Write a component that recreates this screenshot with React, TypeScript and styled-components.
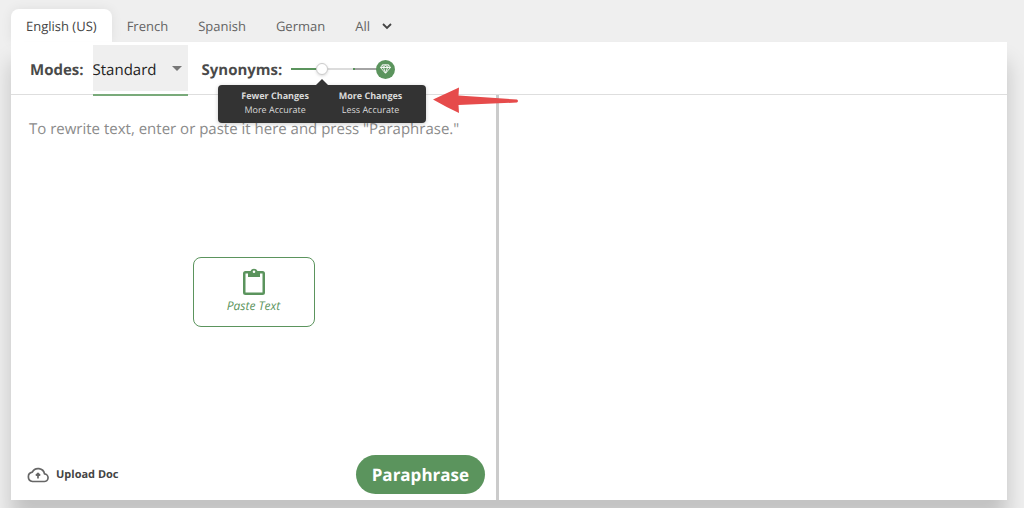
import React, { useState } from "react";
import styled, { createGlobalStyle } from "styled-components";

const green = "#5b945d";

const GlobalStyle = createGlobalStyle`
  *, *::before, *::after { box-sizing: border-box; }
  html, body { margin: 0; }
  body {
    background: #efefef;
    color: #4a4a4a;
    font-family: "Open Sans", "Noto Sans", sans-serif;
    text-rendering: geometricPrecision;
    overflow: hidden;
  }
  button, input, select, textarea {
    font-family: inherit;
    margin: 0;
    text-rendering: inherit;
  }
`;

const Page = styled.main`
  display: flex;
  flex-direction: column;
  min-height: 100vh;
  padding: 9px 17px 8px 11px;
`;

const Tabs = styled.div`
  display: flex;
  align-items: stretch;
  height: 33px;
`;

const Tab = styled.button<{ $active?: boolean }>`
  display: flex;
  align-items: center;
  gap: 11px;
  padding: 0 15px;
  border: 0;
  border-radius: 8px 8px 0 0;
  background: ${(p) => (p.$active ? "#fff" : "transparent")};
  box-shadow: ${(p) => (p.$active ? "0 0 12px rgba(0, 0, 0, 0.07)" : "none")};
  color: ${(p) => (p.$active ? "#444" : "#636363")};
  font-size: 13px;
  font-weight: ${(p) => (p.$active ? 500 : 400)};
`;

const Panel = styled.section`
  position: relative;
  flex: 1;
  display: flex;
  flex-direction: column;
  background: #fff;
  box-shadow: 0 20px 20px rgba(0, 0, 0, 0.19);
`;

const Toolbar = styled.div`
  display: flex;
  align-items: flex-start;
  height: 53px;
  padding: 3px 19px 0;
  border-bottom: 1px solid #dedede;
`;

const ToolLabel = styled.label`
  line-height: 50px;
  font-size: 15px;
  font-weight: 700;
`;

const ModePicker = styled.div`
  position: relative;
  width: 95px;
  height: 51px;
  margin: 0 14px 0 9px;
  border-bottom: 2px solid #79aa7a;
`;

const ModeSelect = styled.select`
  appearance: none;
  width: 100%;
  height: 46px;
  padding: 4px 0 0;
  border: 0;
  background: #efefef;
  color: #222;
  font-size: 15px;
  font-weight: 500;
`;

const Caret = styled.svg`
  position: absolute;
  right: 6px;
  top: 21px;
  pointer-events: none;
`;

const SliderGroup = styled.div`
  position: relative;
  display: flex;
  align-items: center;
  height: 48px;
  width: 104px;
  margin-left: 9px;
`;

const Slider = styled.input<{ $value: number }>`
  appearance: none;
  width: 94px;
  height: 12px;
  background: linear-gradient(
      to right,
      ${green} 0 ${(p) => p.$value}%,
      #dcdcdc ${(p) => p.$value}% 66%,
      ${green} 66% 68%,
      #a4a4a4 68%
    )
    center / 100% 2px no-repeat;
  &::-webkit-slider-thumb {
    appearance: none;
    width: 12px;
    height: 12px;
    border: 1px solid #ccc;
    border-radius: 50%;
    background: #fff;
    box-shadow: 0 1px 3px rgba(0, 0, 0, 0.15);
  }
`;

const PremiumBadge = styled.span`
  position: absolute;
  right: 0;
  display: grid;
  place-items: center;
  width: 19px;
  height: 19px;
  border-radius: 50%;
  background: ${green};
`;

const Tooltip = styled.div`
  position: absolute;
  z-index: 2;
  top: 40px;
  left: -73px;
  display: flex;
  justify-content: space-between;
  width: 208px;
  height: 38px;
  padding: 4px 24px 0 23px;
  border-radius: 4px;
  background: #333;
  color: #dadada;
  box-shadow: 0 1px 4px rgba(0, 0, 0, 0.2);
  font-size: 9px;
  line-height: 14px;
  text-align: center;
  white-space: nowrap;
  &::before {
    content: "";
    position: absolute;
    left: 98px;
    top: -6px;
    border: 6px solid transparent;
    border-top: 0;
    border-bottom-color: #333;
  }
`;

const TooltipColumn = styled.div`
  display: flex;
  flex-direction: column;
`;

const Arrow = styled.svg`
  position: absolute;
  z-index: 2;
  left: 421px;
  top: 45px;
`;

const Panes = styled.div`
  flex: 1;
  display: flex;
`;

const InputPane = styled.div`
  flex: 0 0 49%;
  display: flex;
  flex-direction: column;
  border-right: 3px solid #cbcbcb;
`;

const OutputPane = styled.div`
  flex: 1;
`;

const Editor = styled.div`
  flex: 1;
  display: grid;
  > * { grid-area: 1 / 1; }
`;

const TextInput = styled.textarea`
  width: 100%;
  height: 100%;
  padding: 23px 18px;
  border: 0;
  outline: 0;
  resize: none;
  background: transparent;
  font-size: 15px;
  line-height: 22px;
  &::placeholder { color: #8b8b8b; }
`;

const PasteButton = styled.button`
  place-self: center;
  display: flex;
  flex-direction: column;
  align-items: center;
  width: 122px;
  height: 70px;
  margin-top: 34px;
  padding: 9px 0 0;
  border: 1px solid ${green};
  border-radius: 8px;
  background: #fff;
  color: ${green};
  font-size: 12px;
  font-style: italic;
  line-height: 18px;
`;

const Footer = styled.div`
  display: flex;
  align-items: center;
  justify-content: space-between;
  padding: 0 11px 6px 16px;
`;

const UploadButton = styled.button`
  display: flex;
  align-items: center;
  gap: 7px;
  padding: 0;
  border: 0;
  background: none;
  color: #444;
  font-size: 11px;
  font-weight: 700;
`;

const ParaphraseButton = styled.button`
  height: 39px;
  padding: 0 16px;
  border: 0;
  border-radius: 20px;
  background: ${green};
  color: #fff;
  font-size: 17px;
  font-weight: 700;
`;

const languages = ["English (US)", "French", "Spanish", "German"];

export default function App() {
  const [active, setActive] = useState(languages[0]);
  const [level, setLevel] = useState(30);

  return (
    <>
      <GlobalStyle />
      <Page>
        <Tabs>
          {languages.map((name) => (
            <Tab key={name} $active={name === active} onClick={() => setActive(name)}>
              {name}
            </Tab>
          ))}
          <Tab>
            All
            <svg width="12" height="8" viewBox="0 0 12 8" fill="none" stroke="#444" strokeWidth="1.800">
              <path d="M2 2l4 4 4-4" />
            </svg>
          </Tab>
        </Tabs>
        <Panel>
          <Toolbar>
            <ToolLabel htmlFor="mode">Modes:</ToolLabel>
            <ModePicker>
              <ModeSelect id="mode" defaultValue="Standard">
                <option>Standard</option>
              </ModeSelect>
              <Caret width="10" height="6" viewBox="0 0 10 6">
                <path d="M0 0h10L5 5z" fill="#777" />
              </Caret>
            </ModePicker>
            <ToolLabel htmlFor="synonyms">Synonyms:</ToolLabel>
            <SliderGroup>
              <Slider
                id="synonyms"
                type="range"
                min={0}
                max={100}
                value={level}
                $value={level}
                onChange={(e) => setLevel(Number(e.target.value))}
              />
              <PremiumBadge>
                <svg width="11" height="10" viewBox="0 0 11 10" fill="none" stroke="#fff" strokeLinejoin="round">
                  <path d="M2.5.8h6l2 2.7-5 5.8-5-5.8zM.5 3.5h10M3.5 3.5l2 5.5 2-5.5M2.5.8l1 2.7 2-2.7 2 2.7 1-2.7" strokeWidth=".9" />
                </svg>
              </PremiumBadge>
              <Tooltip role="tooltip">
                <TooltipColumn>
                  <strong>Fewer Changes</strong>
                  <span>More Accurate</span>
                </TooltipColumn>
                <TooltipColumn>
                  <strong>More Changes</strong>
                  <span>Less Accurate</span>
                </TooltipColumn>
              </Tooltip>
            </SliderGroup>
          </Toolbar>
          <Arrow width="88" height="27" viewBox="0 0 88 27">
            <path d="M1 12.500L27 .5L26.500 8.500 85 12.500Q87 14 85 15.500L26.500 18 27 26Q14 20 1 12.500z" fill="#e64b4b" />
          </Arrow>
          <Panes>
            <InputPane>
              <Editor>
                <TextInput
                  aria-label="Text to rewrite"
                  placeholder={'To rewrite text, enter or paste it here and press "Paraphrase."'}
                />
                <PasteButton>
                  <svg width="24" height="30" viewBox="0 0 24 30">
                    <path
                      fill={green}
                      fillRule="evenodd"
                      d="M3.500 4H8.500a3.800 3.800 0 0 1 7 0h5A2.500 2.500 0 0 1 23 6.500v19a2.500 2.500 0 0 1-2.500 2.500h-17A2.500 2.500 0 0 1 1 25.500v-19A2.500 2.500 0 0 1 3.500 4zM12 3.500a1.300 1.300 0 1 0 0 2.600A1.300 1.300 0 0 0 12 3.500zM3.500 6.500v19h17v-19H18V10H6V6.500z"
                    />
                  </svg>
                  Paste Text
                </PasteButton>
              </Editor>
              <Footer>
                <UploadButton>
                  <svg width="22" height="16" viewBox="0 0 22 16" fill="none" stroke="#666" strokeWidth="1.700" strokeLinejoin="round">
                    <path d="M5.500 14.500h11.500a3.800 3.800 0 0 0 .5-7.600A6.500 6.500 0 0 0 5.300 5.200a4.700 4.700 0 0 0 .2 9.300z" />
                    <path d="M11 11.500V6.500M8.800 8.500L11 6.300l2.200 2.200" />
                  </svg>
                  Upload Doc
                </UploadButton>
                <ParaphraseButton>Paraphrase</ParaphraseButton>
              </Footer>
            </InputPane>
            <OutputPane />
          </Panes>
        </Panel>
      </Page>
    </>
  );
}
